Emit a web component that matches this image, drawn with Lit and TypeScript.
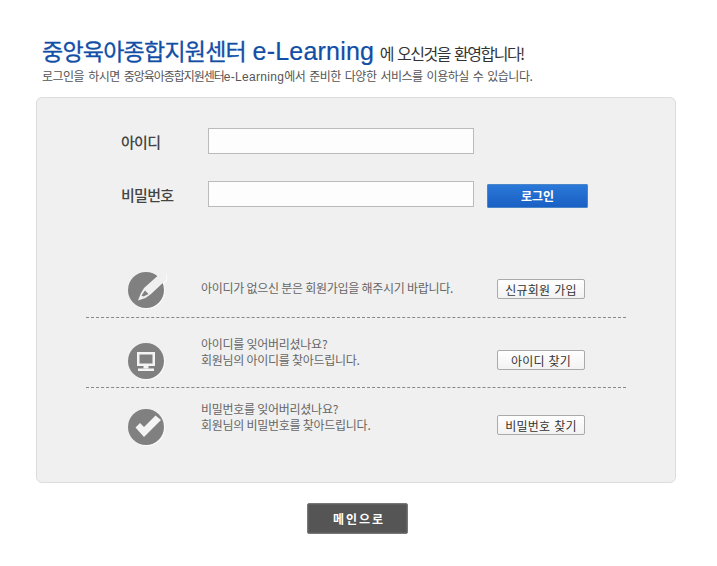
import { css, html, LitElement, svg } from 'lit';
import { customElement } from 'lit/decorators.js';

const icons = {
    pen: svg`<circle cx="18" cy="18" r="18" fill="#808080"/>
<path d="M38 2 L34 0 L16 16 L12.5 22 L10 28.5 L17.5 26 L23 22 L38 8 Z" fill="#f0f0f0"/>
<path d="M17 18.5 L20.5 22 L15.5 24.5 L13.5 23.5 Z" fill="#808080"/>`,
    monitor: svg`<circle cx="18" cy="18" r="18" fill="#808080"/>
<path d="M9 9 H27 V23 H9 Z M11.5 11.5 V20.5 H24.5 V11.5 Z" fill="#f4f4f4" fill-rule="evenodd"/>
<rect x="15.5" y="23" width="5" height="2.5" fill="#f4f4f4"/>
<rect x="10" y="25.5" width="16" height="2.5" fill="#f4f4f4"/>`,
    check: svg`<circle cx="18" cy="18" r="18" fill="#808080"/>
<path d="M7.5 18.5 L12 14 L16 18 L27.5 6.5 L33 11 L16 28 Z" fill="#f4f4f4"/>`,
};

const infoRows = [
    { icon: icons.pen, lines: ['아이디가 없으신 분은 회원가입을 해주시기 바랍니다.'], action: '신규회원 가입', kind: 'join' },
    { icon: icons.monitor, lines: ['아이디를 잊어버리셨나요?', '회원님의 아이디를 찾아드립니다.'], action: '아이디 찾기', kind: 'find-id' },
    { icon: icons.check, lines: ['비밀번호를 잊어버리셨나요?', '회원님의 비밀번호를 찾아드립니다.'], action: '비밀번호 찾기', kind: 'find-pw' },
];

@customElement('app-root')
export class AppRoot extends LitElement
{
    protected render(): unknown
    {
        return html`
<div class="page">
    <header class="head">
        <h1><strong>중앙육아종합지원센터</strong> <em>e-Learning</em> <span>에 오신것을 환영합니다!</span></h1>
        <p>로그인을 하시면 <b>중앙육아종합지원센터</b><em>e-Learning</em>에서 준비한 다양한 서비스를 이용하실 수 있습니다.</p>
    </header>
    <section class="panel">
        <form class="login">
            <label>아이디</label>
            <input type="text" />
            <span></span>
            <label>비밀번호</label>
            <input type="password" />
            <button type="button" class="submit">로그인</button>
        </form>
        <div class="info">
            ${infoRows.map((row) => html`
            <div class="row ${row.kind}">
                <svg class="icon" width="38" height="38" viewBox="0 0 38 38">${row.icon}</svg>
                <div class="text">${row.lines.map((line) => html`<div>${line}</div>`)}</div>
                <button type="button" class="action">${row.action}</button>
            </div>`)}
        </div>
    </section>
    <div class="foot"><button type="button" class="main">메인으로</button></div>
</div>`;
    }

    static get styles()
    {
        return css`
:host {
    display: block;
    width: 717px;
    height: 566px;
    background: #fff;
    overflow: hidden;
    font-family: "Noto Sans CJK KR", "Liberation Sans", sans-serif;
}

* {
    box-sizing: border-box;
    margin: 0;
    padding: 0;
}

.page {
    padding: 36px 41px 0 36px;
}

.head {
    padding-left: 6px;
    height: 61px;
}

h1 {
    font-size: 16px;
    font-weight: 400;
    line-height: 28px;
    white-space: nowrap;
}

h1 strong {
    font-size: 23px;
    font-weight: 400;
    color: #114ea6;
    letter-spacing: -0.76px;
    -webkit-text-stroke: 0.3px #114ea6;
}

h1 em {
    margin-left: 3px;
    font-family: "Liberation Sans", sans-serif;
    font-size: 25px;
    font-style: normal;
    color: #114ea6;
    letter-spacing: 0.2px;
    -webkit-text-stroke: 0.2px #114ea6;
}

h1 span {
    margin-left: 2px;
    color: #333;
    letter-spacing: -1.5px;
    word-spacing: 2px;
}

.head p {
    font-size: 12px;
    line-height: 18px;
    color: #555;
    letter-spacing: -0.5px;
    word-spacing: 1.8px;
    white-space: nowrap;
}

.head p b {
    font-weight: 400;
    letter-spacing: -1.04px;
}

.head p em {
    font-family: "Liberation Sans", sans-serif;
    font-style: normal;
    letter-spacing: 0.3px;
}

.panel {
    height: 386px;
    background: #f0f0f0;
    border: 1px solid #dcdcdc;
    border-radius: 6px;
    padding: 30px 49px 0 49px;
}

.login {
    display: grid;
    grid-template-columns: 87px 266px 114px;
    grid-template-rows: 26px 26px;
    row-gap: 27px;
    align-items: center;
    padding-left: 35px;
}

.login label {
    font-size: 15px;
    font-weight: 500;
    color: #444;
    letter-spacing: -0.7px;
}

.login input {
    width: 266px;
    height: 26px;
    background: #fdfdfd;
    border: 1px solid #bbb;
    outline: none;
}

.submit {
    justify-self: end;
    width: 101px;
    height: 24px;
    margin-top: 3px;
    background: linear-gradient(#2a78d8, #1a60c4);
    border: 1px solid #4a86c8;
    border-radius: 1px;
    color: #fff;
    font: 700 12px "Noto Sans CJK KR", sans-serif;
}

.info {
    margin-top: 47px;
    width: 540px;
}

.row {
    display: grid;
    grid-template-columns: 115px 296px 88px;
    align-items: start;
    border-bottom: 1px dashed #888;
}

.row:last-child {
    border-bottom: none;
}

.join {
    height: 64px;
}

.find-id {
    height: 70px;
}

.find-pw {
    height: 66px;
}

.icon {
    margin-left: 42px;
    overflow: visible;
    filter: drop-shadow(1px 1px 0 #fafafa);
}

.join .icon { margin-top: 18px; }
.join .text { margin-top: 26px; }
.join .action { margin-top: 25px; }
.find-id .icon { margin-top: 25px; }
.find-id .text { margin-top: 18px; }
.find-id .action { margin-top: 32px; }
.find-pw .icon { margin-top: 21px; }
.find-pw .text { margin-top: 13px; }
.find-pw .action { margin-top: 27px; }

.text {
    font-size: 12px;
    line-height: 16px;
    color: #666;
    letter-spacing: -0.27px;
    white-space: nowrap;
}

.action {
    width: 88px;
    height: 20px;
    background: linear-gradient(#fff, #f2f2f2);
    border: 1px solid #aaa;
    border-radius: 2px;
    color: #333;
    font: 400 12px "Noto Sans CJK KR", sans-serif;
    letter-spacing: 0.2px;
    word-spacing: 1px;
}

.foot {
    display: flex;
    justify-content: center;
    padding: 20px 0 0 3px;
}

.main {
    width: 101px;
    height: 31px;
    padding-left: 3px;
    background: #555;
    border: 1px solid #777;
    border-radius: 2px;
    box-shadow: inset 0 0 0 1px #5f5f5f;
    color: #fff;
    font: 700 12px "Noto Sans CJK KR", sans-serif;
    letter-spacing: 2px;
}
        `;
    }
}
